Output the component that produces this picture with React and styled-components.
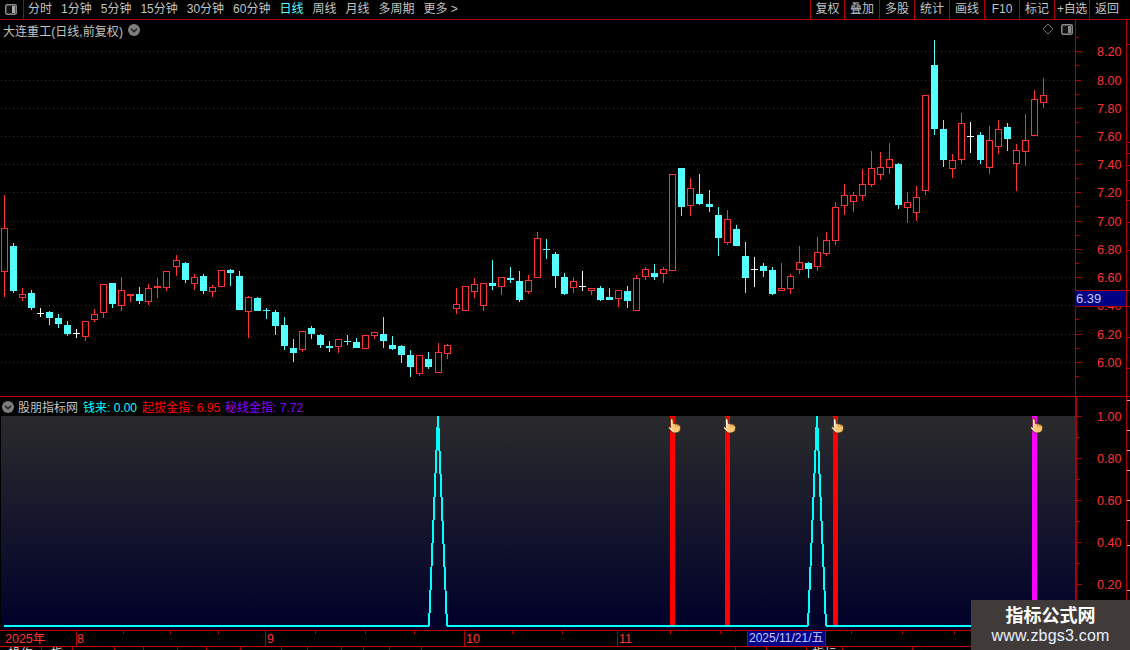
import React from "react";
import styled, { createGlobalStyle } from "styled-components";

const RED = "#ad0000";
const UP = "#ff3232";
const DOWN = "#54ffff";
const FONT = `"Liberation Sans", "Noto Sans CJK SC", sans-serif`;

const Global = createGlobalStyle`
  html, body { margin: 0; padding: 0; background: #000; }
  * { box-sizing: border-box; }
`;

const Page = styled.div`
  position: relative;
  width: 1130px;
  height: 650px;
  overflow: hidden;
  background: #000;
  font-family: ${FONT};
  font-size: 12px;
  color: #c4c4c4;
  display: flex;
  flex-direction: column;
`;

const Toolbar = styled.header`
  flex: 0 0 20px;
  display: flex;
  align-items: stretch;
  border-bottom: 1px solid ${RED};
`;
const ToggleCell = styled.div`
  flex: 0 0 24px;
  display: flex;
  align-items: center;
  padding-left: 5px;
  border-right: 1px solid ${RED};
`;
const PeriodList = styled.nav`
  display: flex;
  align-items: center;
  gap: 9px;
  padding-left: 4px;
`;
const Period = styled.span`
  white-space: nowrap;
  line-height: 19px;
  color: ${(p) => (p.$active ? "#5fffff" : "#c4c4c4")};
`;
const ActionGrid = styled.div`
  margin-left: auto;
  display: grid;
  grid-template-columns: 34px repeat(8, 35px) 41px;
  width: 320px;
`;
const ActionButton = styled.div`
  border-left: 1px solid ${RED};
  text-align: center;
  line-height: 19px;
  white-space: nowrap;
  letter-spacing: ${(p) => (p.$tight ? "-0.4px" : "0")};
`;

const MainRow = styled.section`
  flex: 0 0 376px;
  display: flex;
  position: relative;
`;
const LowerBlock = styled.section`
  flex: 0 0 234px;
  display: flex;
  border-top: 1px solid #c00000;
`;
const LowerColumn = styled.div`
  flex: 0 0 1075px;
  display: flex;
  flex-direction: column;
  min-width: 0;
`;
const PricePane = styled.div`
  flex: 0 0 1075px;
  position: relative;
  overflow: hidden;
`;
const GradientPane = styled.div`
  flex: 1;
  margin-left: 1px;
  overflow: hidden;
  background: linear-gradient(#2a2a2c 0%, #15162c 50%, #00002a 100%);
`;
const AxisPane = styled.div`
  flex: 1;
  position: relative;
  border-left: ${(p) => (p.$thick ? 2 : 1)}px solid ${RED};
`;
const Drawing = styled.svg`
  display: block;
  shape-rendering: crispEdges;
`;
const AxisLabel = styled.text`
  font-family: ${FONT};
  font-size: 12.5px;
  fill: ${UP};
  shape-rendering: auto;
`;
const Title = styled.div`
  position: absolute;
  left: 3px;
  top: 0;
  height: 20px;
  display: flex;
  align-items: center;
  gap: 5px;
  font-size: 12px;
  white-space: nowrap;
`;
const TitleText = styled.span`
  letter-spacing: 0.05px;
`;
const PaneTools = styled.div`
  position: absolute;
  right: 2px;
  top: 3px;
  display: flex;
  align-items: center;
  gap: 7px;
`;
const PriceTag = styled.div`
  position: absolute;
  left: -1px;
  top: 270px;
  width: 52px;
  height: 17px;
  background: #000084;
  border: 1px solid ${RED};
  border-left: none;
  color: #c8c8ff;
  font-size: 13px;
  line-height: 15px;
  padding-left: 1px;
`;
const IndicatorHeader = styled.div`
  flex: 0 0 19px;
  display: flex;
  align-items: center;
  gap: 5px;
  padding-left: 2px;
  white-space: nowrap;
`;
const HeaderName = styled.span`
  margin-left: -1px;
  color: #c4c4c4;
`;
const Legend = styled.span`
  color: ${(p) => p.$color};
`;
const TimeAxis = styled.div`
  position: relative;
  flex: 0 0 17px;
  border-top: 1px solid #c00000;
  border-bottom: 1px solid #c00000;
`;
const DateTag = styled.div`
  position: absolute;
  left: 747px;
  top: 0;
  width: 79px;
  height: 15px;
  background: #00008a;
  border-left: 1px solid ${RED};
  border-right: 1px solid ${RED};
  color: #c8c8ff;
  font-size: 12px;
  line-height: 15px;
  padding-left: 1px;
  white-space: nowrap;
`;
const TabRow = styled.div`
  flex: 1;
  display: flex;
  overflow: hidden;
`;
const Tab = styled.div`
  flex: 0 0 ${(p) => p.$w}px;
  border-right: 1px solid ${RED};
  padding-top: 1px;
  line-height: 13px;
  text-align: center;
  color: #ddd;
  white-space: nowrap;
  overflow: hidden;
`;
const Watermark = styled.aside`
  position: absolute;
  right: 0;
  bottom: 0;
  width: 159px;
  height: 50px;
  background: #403a39;
  display: flex;
  flex-direction: column;
  align-items: center;
  justify-content: center;
  padding-bottom: 1px;
`;
const WatermarkTitle = styled.div`
  color: #fff;
  font-weight: 700;
  font-size: 18px;
  line-height: 22px;
`;
const WatermarkUrl = styled.div`
  color: #e8f0ff;
  font-size: 16px;
  line-height: 18px;
  letter-spacing: 0.2px;
`;

/* ---------- data: [x, wickTop, wickBottom, bodyTop, bodyBottom, type], read at 3x ---------- */
const group = (ox, oy, rows) =>
  rows.map(([x, wt, wb, bt, bb, t]) => ({
    x: Math.round(ox + x / 3 - 0.4),
    wt: oy + wt / 3,
    wb: oy + wb / 3,
    bt: oy + bt / 3,
    bb: oy + bb / 3,
    t,
  }));

const candles = [
  ...group(0, 180, [
    [13, 45, 350, 145, 275, "R"], [40, 190, 338, 198, 333, "C"], [67, 324, 362, 343, 353, "R"],
    [94, 330, 389, 339, 384, "C"], [121, 385, 410, 398, 398, "W"], [148, 393, 435, 396, 414, "C"],
    [175, 403, 444, 414, 432, "C"], [202, 423, 468, 435, 462, "C"], [229, 447, 474, 460, 460, "W"],
    [256, 423, 483, 424, 470, "R"], [283, 388, 426, 403, 419, "R"], [310, 313, 414, 313, 398, "R"],
    [337, 309, 384, 309, 372, "C"], [364, 292, 392, 331, 377, "R"], [391, 342, 366, 342, 347, "F"],
    [418, 321, 372, 342, 363, "C"], [445, 312, 375, 325, 365, "R"], [472, 294, 354, 318, 323, "F"],
    [499, 274, 333, 274, 323, "R"], [529, 225, 288, 241, 260, "R"], [556, 246, 309, 249, 300, "C"],
    [583, 282, 330, 292, 311, "R"], [610, 282, 342, 288, 333, "C"], [637, 316, 351, 322, 335, "R"],
    [664, 271, 320, 271, 320, "R"], [691, 267, 318, 270, 279, "C"], [718, 273, 390, 288, 390, "C"],
  ]),
  ...group(240, 220, [
    [25, 228, 354, 232, 275, "R"], [52, 231, 273, 234, 273, "C"], [79, 264, 297, 270, 273, "C"],
    [106, 270, 345, 276, 318, "C"], [133, 291, 390, 315, 378, "C"], [160, 357, 426, 384, 399, "C"],
    [187, 334, 396, 334, 390, "R"], [214, 318, 357, 324, 342, "C"], [241, 342, 384, 345, 375, "C"],
    [268, 363, 396, 378, 384, "C"], [295, 358, 399, 358, 381, "R"], [322, 345, 375, 364, 366, "C"],
    [349, 354, 384, 366, 384, "C"], [376, 346, 388, 346, 387, "R"], [403, 337, 357, 337, 347, "R"],
    [430, 291, 384, 342, 363, "C"], [457, 348, 390, 375, 387, "C"], [484, 376, 429, 378, 405, "C"],
    [511, 390, 471, 405, 441, "C"], [538, 406, 468, 406, 462, "R"], [565, 396, 447, 417, 441, "C"],
    [595, 370, 459, 397, 459, "R"], [622, 373, 417, 376, 402, "R"], [649, 204, 282, 253, 267, "R"],
    [676, 199, 273, 199, 273, "R"], [703, 175, 234, 193, 215, "R"],
  ]),
  ...group(480, 160, [
    [10, 370, 453, 370, 438, "R"], [37, 300, 390, 369, 378, "C"], [64, 352, 405, 352, 381, "R"],
    [91, 321, 369, 354, 360, "C"], [118, 333, 426, 363, 420, "C"], [145, 346, 402, 361, 396, "R"],
    [172, 216, 354, 235, 354, "R"], [199, 237, 297, 268, 268, "C"], [226, 276, 384, 282, 348, "C"],
    [253, 339, 405, 351, 402, "C"], [280, 351, 399, 364, 384, "R"], [307, 333, 393, 379, 379, "W"],
    [334, 385, 405, 385, 393, "R"], [361, 378, 423, 384, 420, "C"], [388, 384, 420, 411, 420, "C"],
    [415, 391, 441, 391, 417, "R"], [442, 378, 444, 393, 423, "C"], [469, 346, 453, 355, 453, "R"],
    [496, 321, 360, 328, 351, "R"], [523, 312, 360, 339, 351, "C"], [550, 321, 369, 328, 342, "R"],
    [577, 43, 333, 43, 333, "R"], [604, 24, 168, 24, 141, "C"], [631, 54, 168, 85, 138, "R"],
    [658, 42, 135, 102, 132, "C"], [688, 90, 156, 132, 141, "C"], [715, 141, 288, 165, 234, "C"],
  ]),
  ...group(700, 140, [
    [55, 201, 348, 225, 294, "C"], [82, 210, 315, 238, 309, "R"], [109, 255, 318, 267, 318, "C"],
    [136, 306, 459, 348, 414, "C"], [163, 351, 441, 388, 388, "W"], [190, 369, 411, 378, 393, "C"],
    [217, 381, 465, 390, 462, "C"], [244, 369, 453, 445, 453, "R"], [271, 402, 462, 409, 447, "R"],
    [298, 318, 402, 367, 389, "R"], [325, 366, 414, 369, 387, "C"], [352, 291, 393, 337, 381, "R"],
    [379, 276, 348, 301, 342, "R"], [406, 186, 315, 202, 303, "R"], [433, 132, 225, 166, 197, "R"],
    [460, 156, 216, 166, 185, "R"], [487, 87, 183, 133, 167, "R"], [514, 33, 141, 85, 135, "R"],
    [541, 36, 120, 82, 104, "R"], [568, 9, 102, 58, 83, "R"], [595, 69, 207, 72, 195, "C"],
    [622, 156, 249, 187, 203, "R"], [649, 138, 243, 172, 218, "R"],
  ]),
  ...group(890, 30, [
    [106, 195, 495, 195, 482, "R"], [133, 30, 315, 105, 297, "C"], [160, 270, 410, 297, 390, "C"],
    [187, 372, 444, 391, 416, "R"], [214, 249, 402, 280, 391, "R"], [241, 276, 369, 319, 319, "W"],
    [271, 306, 402, 315, 390, "C"], [298, 288, 432, 331, 413, "R"], [325, 270, 372, 298, 350, "R"],
    [352, 279, 363, 291, 327, "C"], [379, 342, 483, 361, 402, "R"], [406, 252, 408, 331, 365, "R"],
    [433, 180, 318, 208, 318, "R"], [460, 144, 234, 196, 218, "R"],
  ]),
];

const priceTicks = [
  ["8.20", 51], ["8.00", 80], ["7.80", 108], ["7.60", 136], ["7.40", 164], ["7.20", 192],
  ["7.00", 221], ["6.80", 249], ["6.60", 277], ["6.40", 305], ["6.20", 334], ["6.00", 362],
];
const indicatorTicks = [["1.00", 416], ["0.80", 458], ["0.60", 500], ["0.40", 542], ["0.20", 584]];
const edgeTicksTop = [44, 142, 153, 165, 180, 200, 222, 250, 290, 306, 337, 368];
const edgeTicksLow = [400, 430, 450, 470, 500, 520, 545, 590];

const periods = ["分时", "1分钟", "5分钟", "15分钟", "30分钟", "60分钟", "日线", "周线", "月线", "多周期", "更多 >"];
const actions = ["复权", "叠加", "多股", "统计", "画线", "F10", "标记", "+自选", "返回"];
const tabs = [[42, "操作"], [31, "指"], [42, ""], [29, ""], [34, ""], [29, ""], [34, ""], [41, ""], [26, ""], [34, ""], [22, ""], [26, ""], [32, ""], [314, ""], [31, ""], [40, ""], [36, "指标"], [70, ""]];

const Candle = ({ c }) => {
  const color = c.t === "C" ? DOWN : c.t === "W" ? "#fff" : UP;
  const wx = c.x + 0.5;
  const top = Math.round(c.bt);
  const bottom = Math.round(c.bb);
  return (
    <g>
      <line x1={wx} x2={wx} y1={Math.round(c.wt)} y2={Math.round(c.wb)} stroke={color} />
      {c.t === "W" || bottom - top < 1 ? (
        <rect x={c.x - 3} y={top} width={7} height={1} fill={color} />
      ) : c.t === "C" || c.t === "F" ? (
        <rect x={c.x - 3} y={top} width={7} height={bottom - top} fill={color} />
      ) : (
        <rect x={c.x - 2.5} y={top + 0.5} width={6} height={bottom - top - 1} fill="#000" stroke={color} />
      )}
    </g>
  );
};

const ToggleIcon = ({ dim }) => (
  <svg width="12" height="11" viewBox="0 0 12 11">
    <rect x="0.75" y="0.75" width="10.5" height="9.5" rx="1.5" fill="#111" stroke="#8a8a8a" strokeWidth="1.5" />
    <rect x="7" y="2" width="3" height="7" fill={dim ? "#8a8a8a" : "#a8a8a8"} />
  </svg>
);

const Chevron = () => (
  <svg width="12" height="12" viewBox="0 0 12 12">
    <circle cx="6" cy="6" r="6" fill="#7d7d7d" />
    <path d="M3 4.8 L6 7.8 L9 4.8" fill="none" stroke="#222" strokeWidth="1.5" />
  </svg>
);

const Hand = ({ x }) => (
  <g transform={`translate(${x} 418)`} style={{ shapeRendering: "auto" }}>
    <path
      d="M2.6 1 Q3.8 -0.2 5 1 L5.6 5.6 L9 6 Q12.6 6.6 12.6 9.4 L12.2 12.2 Q11 15 8 15 L5.6 15 Q3.6 14 0.4 10 Q0 8.6 2 8.8 L3 9.4 Z"
      fill="#fbc676"
      stroke="#4a2a10"
      strokeWidth="0.9"
    />
    <path d="M3.4 1.6 L3.8 9.6 M1.6 9.6 L5 13.6" stroke="#fff" strokeWidth="1" fill="none" />
    <path d="M7.6 6.4 L7.8 8.6 M10 6.8 L10 9" stroke="#a9702c" strokeWidth="0.7" fill="none" />
  </g>
);

const AxisTicks = ({ ticks, top, step, labelX, edgeX, edge, edgeColor }) => (
  <>
    {ticks.map(([label, y]) => (
      <g key={label}>
        <rect x={0} y={y} width={5} height={1} fill={RED} />
        <rect x={0} y={y + step} width={3} height={1} fill={RED} />
        <AxisLabel x={labelX} y={y + 5}>
          {label}
        </AxisLabel>
      </g>
    ))}
    <rect x={0} y={top} width={3} height={1} fill={RED} />
    <rect x={edgeX} y={0} width={1} height={650} fill={RED} />
    {edge.map((y) => (
      <rect key={y} x={edgeX + 1} y={y} width={3} height={1} fill={edgeColor} />
    ))}
  </>
);

const peak = (x) => `${x - 9.5},625.5 ${x - 9},625 ${x},416 ${x + 9},625 ${x + 9.5},625.5`;
const cyanLine = `4,625.5 ${peak(438)} ${peak(817)} 1072,625.5`;

const bars = [
  [670, "#ff0000"],
  [725, "#ff0000"],
  [833, "#ff0000"],
  [1032, "#ff00ff"],
];

export default function App() {
  return (
    <Page>
      <Global />
      <Toolbar>
        <ToggleCell>
          <ToggleIcon />
        </ToggleCell>
        <PeriodList>
          {periods.map((p) => (
            <Period key={p} $active={p === "日线"}>
              {p}
            </Period>
          ))}
        </PeriodList>
        <ActionGrid>
          {actions.map((a) => (
            <ActionButton key={a} $tight={a === "+自选"}>
              {a}
            </ActionButton>
          ))}
        </ActionGrid>
      </Toolbar>

      <MainRow>
        <PricePane>
          <Drawing width="1075" height="376" viewBox="0 20 1075 376">
            {priceTicks.map(([l, y]) => (
              <line key={l} x1="1" x2="1075" y1={y + 0.5} y2={y + 0.5} stroke="#a00000" strokeDasharray="1 3" />
            ))}
            {candles.map((c, i) => (
              <Candle key={i} c={c} />
            ))}
          </Drawing>
          <Title>
            <TitleText>大连重工(日线,前复权)</TitleText>
            <Chevron />
          </Title>
          <PaneTools>
            <svg width="12" height="12" viewBox="0 0 12 12">
              <path d="M6 1 L11 6 L6 11 L1 6 Z" fill="none" stroke="#777" />
            </svg>
            <ToggleIcon dim />
          </PaneTools>
        </PricePane>
        <AxisPane>
          <Drawing width="54" height="376" viewBox="0 20 54 376">
            <AxisTicks ticks={priceTicks} top={37} step={14} labelX={21} edgeX={50} edge={edgeTicksTop} edgeColor={RED} />
          </Drawing>
          <PriceTag>6.39</PriceTag>
        </AxisPane>
      </MainRow>

      <LowerBlock>
        <LowerColumn>
          <IndicatorHeader>
            <Chevron />
            <HeaderName>股朋指标网</HeaderName>
            <Legend $color="#00ffff">钱来: 0.00</Legend>
            <Legend $color="#ff0000">起拔金指: 6.95</Legend>
            <Legend $color="#9000ff">秘线金指: 7.72</Legend>
          </IndicatorHeader>
          <GradientPane>
            <Drawing width="1074" height="214" viewBox="1 416 1074 214">
              {bars.map(([x, color]) => (
                <rect key={x} x={x} y={416} width={5} height={210} fill={color} />
              ))}
              <polyline points={cyanLine} fill="none" stroke="#00ffff" strokeWidth="2" />
              {bars.map(([x]) => (
                <Hand key={x} x={x - 2} />
              ))}
            </Drawing>
          </GradientPane>
        </LowerColumn>
        <AxisPane $thick>
          <Drawing width="53" height="233" viewBox="0 397 53 233">
            <AxisTicks ticks={indicatorTicks} top={437} step={21} labelX={20} edgeX={49} edge={edgeTicksLow} edgeColor="#d8a0a0" />
          </Drawing>
        </AxisPane>
      </LowerBlock>

      <TimeAxis>
        <Drawing width="1130" height="15" viewBox="0 0 1130 15">
          {[76, 265, 464, 617].map((x) => (
            <rect key={x} x={x} y={0} width={1} height={15} fill={RED} />
          ))}
          {[123, 170, 218, 315, 365, 414, 512, 562, 670, 720, 851, 902, 954].map((x) => (
            <rect key={x} x={x} y={0} width={1} height={3} fill={RED} />
          ))}
          {[["2025年", 5], ["8", 77], ["9", 267], ["10", 466], ["11", 619]].map(([t, x]) => (
            <AxisLabel key={t} x={x} y={12}>
              {t}
            </AxisLabel>
          ))}
        </Drawing>
        <DateTag>2025/11/21/五</DateTag>
      </TimeAxis>

      <TabRow>
        {tabs.map(([w, t], i) => (
          <Tab key={i} $w={w}>
            {t}
          </Tab>
        ))}
      </TabRow>

      <Watermark>
        <WatermarkTitle>指标公式网</WatermarkTitle>
        <WatermarkUrl>www.zbgs3.com</WatermarkUrl>
      </Watermark>
    </Page>
  );
}
